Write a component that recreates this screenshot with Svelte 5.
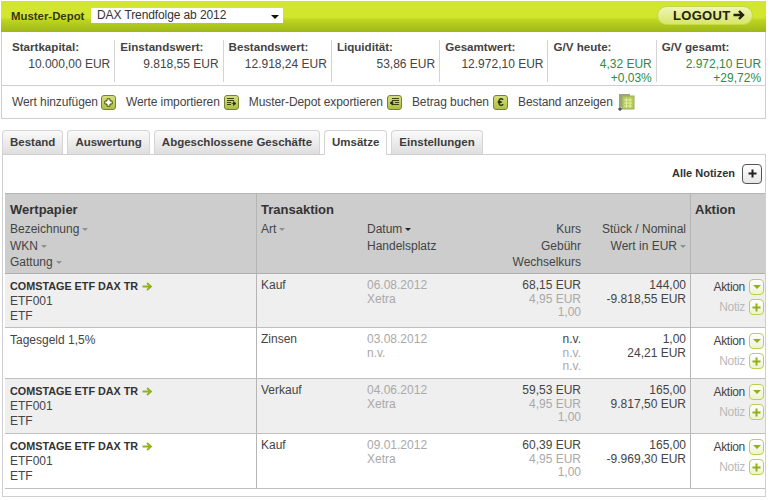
<script>
  const stats = [
    { l: 'Startkapital:', v: ['10.000,00 EUR'] },
    { l: 'Einstandswert:', v: ['9.818,55 EUR'] },
    { l: 'Bestandswert:', v: ['12.918,24 EUR'] },
    { l: 'Liquidität:', v: ['53,86 EUR'] },
    { l: 'Gesamtwert:', v: ['12.972,10 EUR'] },
    { l: 'G/V heute:', v: ['4,32 EUR', '+0,03%'], g: true },
    { l: 'G/V gesamt:', v: ['2.972,10 EUR', '+29,72%'], g: true }
  ];
  const tabs = ['Bestand', 'Auswertung', 'Abgeschlossene Geschäfte', 'Umsätze', 'Einstellungen'];
  const rows = [
    { alt: true, h: 54, name: 'COMSTAGE ETF DAX TR', wkn: 'ETF001', gat: 'ETF', art: 'Kauf', d: '06.08.2012', p: 'Xetra', k: '68,15 EUR', f: '4,95 EUR', x: '1,00', s: '144,00', w: '-9.818,55 EUR' },
    { alt: false, h: 51, plain: 'Tagesgeld 1,5%', art: 'Zinsen', d: '03.08.2012', p: 'n.v.', k: 'n.v.', f: 'n.v.', x: 'n.v.', s: '1,00', w: '24,21 EUR' },
    { alt: true, h: 55, name: 'COMSTAGE ETF DAX TR', wkn: 'ETF001', gat: 'ETF', art: 'Verkauf', d: '04.06.2012', p: 'Xetra', k: '59,53 EUR', f: '4,95 EUR', x: '1,00', s: '165,00', w: '9.817,50 EUR' },
    { alt: false, h: 55, name: 'COMSTAGE ETF DAX TR', wkn: 'ETF001', gat: 'ETF', art: 'Kauf', d: '09.01.2012', p: 'Xetra', k: '60,39 EUR', f: '4,95 EUR', x: '1,00', s: '165,00', w: '-9.969,30 EUR' }
  ];
</script>

<div class="page">
  <div class="box">
    <div class="head">
      <b class="depot">Muster-Depot</b>
      <div class="select">DAX Trendfolge ab 2012<span class="caret"></span></div>
      <div class="logout">LOGOUT
        <svg width="12" height="10" viewBox="0 0 12 10"><path d="M0.500 5h8M6 1 10 5 6 9" fill="none" stroke="#23230f" stroke-width="2.400"/></svg>
      </div>
    </div>
    <div class="stats">
      {#each stats as s, i}
        <div class="stat" class:last={i === 6}>
          <b>{s.l}</b>
          {#each s.v as v}<div class="val" class:green={s.g}>{v}</div>{/each}
        </div>
      {/each}
    </div>
    <div class="actions">
      <span>Wert hinzufügen</span>
      <span class="ico first-ico"><svg width="9" height="9" viewBox="0 0 9 9"><path d="M3 .8h3v2.200h2.200v3H6v2.200H3V6H.8V3H3z" fill="#fff" stroke="#46520f"/></svg></span>
      <span class="ml">Werte importieren</span>
      <span class="ico"><svg width="11" height="10" viewBox="0 0 11 10"><path d="M1 1.500h7M1 3.500h7M1 5.500h4M1 7.500h4" fill="none" stroke="#39440f"/><path d="M5.500 6.500h3M7.500 4.500l2.500 2-2.500 2z" fill="#222" stroke="#222" stroke-width=".6"/></svg></span>
      <span class="ml">Muster-Depot exportieren</span>
      <span class="ico"><svg width="11" height="10" viewBox="0 0 11 10"><path d="M3 1.500h7M3 3.500h7M6 5.500h4M3 7.500h7" fill="none" stroke="#39440f"/><path d="M5 6H2M3.500 4 1 6l2.500 2z" fill="#222" stroke="#222" stroke-width=".6"/></svg></span>
      <span class="ml">Betrag buchen</span>
      <span class="ico euro">€</span>
      <span class="ml">Bestand anzeigen</span>
      <svg class="doc" width="17" height="17" viewBox="0 0 17 17">
        <rect x="1" y="0" width="11" height="13" fill="#9aa67c"/>
        <rect x="4" y="2" width="12" height="13" fill="#b7cc55" stroke="#98a868"/>
        <path d="M6 6h8M6 9h8M6 12h8M8.500 4v10M12 4v10" stroke="#e3edaa"/>
        <path d="M0 15h4M2 13v4" stroke="#222"/>
      </svg>
    </div>
  </div>

  <div class="tabs">
    {#each tabs as t}
      <div class="tab" class:on={t === 'Umsätze'}>{t}</div>
    {/each}
  </div>

  <div class="panel">
    <div class="notes">
      <b>Alle Notizen</b>
      <span class="plusbtn"><svg width="9" height="9" viewBox="0 0 9 9"><path d="M4.500 .5v8M.5 4.500h8" stroke="#222" stroke-width="2"/></svg></span>
    </div>
    <div class="table">
      <div class="row thead">
        <div class="c first">
          <div class="th">Wertpapier</div>
          <div>Bezeichnung<i class="tri"></i></div>
          <div>WKN<i class="tri"></i></div>
          <div>Gattung<i class="tri"></i></div>
        </div>
        <div class="c">
          <div class="th">Transaktion</div>
          <div>Art<i class="tri"></i></div>
        </div>
        <div class="c date">
          <div class="th">&nbsp;</div>
          <div>Datum<i class="tri dark"></i></div>
          <div>Handelsplatz</div>
        </div>
        <div class="c num">
          <div class="th">&nbsp;</div>
          <div>Kurs</div>
          <div>Gebühr</div>
          <div>Wechselkurs</div>
        </div>
        <div class="c num last">
          <div class="th">&nbsp;</div>
          <div>Stück / Nominal</div>
          <div>Wert in EUR<i class="tri"></i></div>
        </div>
        <div class="c"><div class="th">Aktion</div></div>
      </div>
      {#each rows as r}
        <div class="row body" class:alt={r.alt} style="height:{r.h}px">
          <div class="c first">
            {#if r.name}
              <div class="nm">{r.name}<svg width="11" height="9" viewBox="0 0 11 9"><path d="M0.500 4.500h7M5 1l4 3.500L5 8" fill="none" stroke="#8fb21c" stroke-width="1.800"/></svg></div>
              <div>{r.wkn}</div>
              <div>{r.gat}</div>
            {:else}
              <div>{r.plain}</div>
            {/if}
          </div>
          <div class="c">{r.art}</div>
          <div class="c tight date muted"><div>{r.d}</div><div>{r.p}</div></div>
          <div class="c tight num"><div>{r.k}</div><div class="muted">{r.f}</div><div class="muted">{r.x}</div></div>
          <div class="c tight num last"><div>{r.s}</div><div>{r.w}</div></div>
          <div class="c act2">
            <div class="al"><span>Aktion</span><span class="mini"><i class="gtri"></i></span></div>
            <div class="al note"><span>Notiz</span><span class="mini"><svg width="9" height="9" viewBox="0 0 9 9"><path d="M4.500 .5v8M.5 4.500h8" stroke="#8fb21c" stroke-width="2"/></svg></span></div>
          </div>
        </div>
      {/each}
    </div>
  </div>
</div>

<style>
  :global(body) { margin: 0; background: #fff; }
  .page { width: 770px; height: 500px; overflow: hidden; box-sizing: border-box; padding: 1px 4px 0 1px; font: 12px/17px "Liberation Sans", Arial, sans-serif; color: #444; background: #fff; }
  b { font-weight: bold; }
  .box { border: 1px solid #cfcfcf; border-top: 0; height: 118px; box-sizing: border-box; }
  .head { height: 31px; margin: 0 -1px; display: flex; align-items: center; padding: 0 13px 0 10px; background: linear-gradient(#d3e62e 0, #d3e62e 52%, #bdd421 62%, #9eb819 100%); }
  .depot { color: #33390c; width: 80px; font-size: 11.400px; }
  .select { width: 192px; height: 15px; margin-top: -3px; padding-left: 6px; box-sizing: border-box; background: #fff; color: #333; font-size: 12px; line-height: 14px; letter-spacing: -.1px; position: relative; }
  .caret { position: absolute; right: 4px; top: 7px; border: 4px solid transparent; border-top-color: #111; border-bottom: 0; }
  .logout { margin-left: auto; margin-top: -3px; width: 96px; height: 19px; border-radius: 10px; box-sizing: border-box; padding-left: 15px; background: linear-gradient(#f0f5b4, #d7e66a); border: 1px solid #c5d84a; font: bold 13px/17px "Liberation Sans", sans-serif; letter-spacing: .3px; color: #23230f; display: flex; align-items: center; gap: 3px; }
  .stats { height: 54px; display: grid; grid-template-columns: repeat(7, 108.300px); padding-left: 5px; border-bottom: 1px solid #cfcfcf; box-sizing: border-box; }
  .stat { margin-top: 8px; height: 42px; padding: 0 4px 0 5px; border-right: 1px solid #d4d4d4; box-sizing: border-box; }
  .stat.last { border-right: 0; }
  .stat b { display: block; color: #444; font-size: 11.600px; line-height: 14px; margin-bottom: 3px; }
  .val { text-align: right; line-height: 14px; white-space: nowrap; }
  .val:nth-of-type(1) { margin-top: 2px; }
  .green { color: #2f8a48; }
  .actions { height: 32px; display: flex; align-items: center; padding-left: 10px; letter-spacing: -.08px; }
  .actions span { white-space: nowrap; }
  .ml { margin-left: 10px; }
  .ico { width: 15px; height: 15px; margin-left: 4px; box-sizing: border-box; border: 1px solid #76823a; border-radius: 3px; background: linear-gradient(#d5df7c, #aebf45); display: inline-flex; align-items: center; justify-content: center; }
  .first-ico { margin-left: 3px; }
  .euro { font: bold 11px/13px "Liberation Sans", sans-serif; color: #2a330a; }
  .doc { margin-left: 5px; }
  .tabs { margin-top: 11px; height: 25px; display: flex; gap: 4px; padding-left: 1px; position: relative; z-index: 1; }
  .tab { height: 24px; box-sizing: border-box; padding: 0 7px; border: 1px solid #d4d4d4; border-bottom: 0; border-radius: 4px 4px 0 0; background: linear-gradient(#fafafa, #dedede); font-weight: bold; font-size: 11.500px; line-height: 22px; color: #3c3c3c; white-space: nowrap; }
  .tab.on { background: #fff; height: 25px; }
  .panel { margin: -1px 0 0 1px; height: 343px; box-sizing: border-box; border: 1px solid #cfcfcf; padding: 0 0 2px 2px; background: #fff; }
  .notes { height: 38px; display: flex; align-items: center; justify-content: flex-end; gap: 7px; padding: 0 3px 1px 0; box-sizing: border-box; }
  .notes b { color: #333; font-size: 11px; }
  .plusbtn { width: 20px; height: 20px; box-sizing: border-box; border: 1px solid #555; border-radius: 4px; background: linear-gradient(#fff, #e6e6e6); display: inline-flex; align-items: center; justify-content: center; }
  .table { border-top: 1px solid #b5b5b5; width: 760px; }
  .row { display: grid; grid-template-columns: 252px 110px 100px 118px 106px 74px; border-bottom: 1px solid #bfbfbf; box-sizing: border-box; }
  .thead { height: 80px; background: #cdcdcd; border-bottom-color: #b0b0b0; }
  .th { font: bold 13px/16px "Liberation Sans", sans-serif; color: #333; height: 20px; padding-top: 1px; box-sizing: border-box; }
  .thead .c, .thead .c.first { padding-top: 7px; }
  .thead .c > div:not(.th) { line-height: 16.500px; }
  .c { box-sizing: border-box; padding: 4px 4px; line-height: 15px; white-space: nowrap; }
  .c.first { padding: 5px 4px 4px 5px; }
  .c.tight { line-height: 13.700px; padding-top: 5px; }
  .first { border-right: 1px solid #b5b5b5; }
  .c.date { padding-left: 0; }
  .num { text-align: right; }
  .num.last { border-right: 1px solid #b5b5b5; }
  .alt { background: #efefef; }
  .nm { font-weight: bold; color: #333; display: flex; gap: 4px; align-items: center; font-size: 10.800px; }
  .muted { color: #a9a9a9; }
  .c.act2 { padding: 5px 1px 0 0; display: flex; flex-direction: column; gap: 4px; align-items: flex-end; }
  .al { display: flex; gap: 4px; align-items: center; letter-spacing: -.3px; }
  .note { color: #b9b9b9; }
  .mini { width: 15px; height: 16px; box-sizing: border-box; border: 1px solid #b9cf55; border-radius: 4px; background: linear-gradient(#fff, #eef3d0); display: inline-flex; align-items: center; justify-content: center; }
  .gtri { border: 4px solid transparent; border-top-color: #8fb21c; border-bottom: 0; }
  .tri { display: inline-block; margin-left: 3px; vertical-align: 2px; border: 3.500px solid transparent; border-top-color: #8f8f8f; border-bottom: 0; }
  .tri.dark { border-top-color: #222; }
</style>
